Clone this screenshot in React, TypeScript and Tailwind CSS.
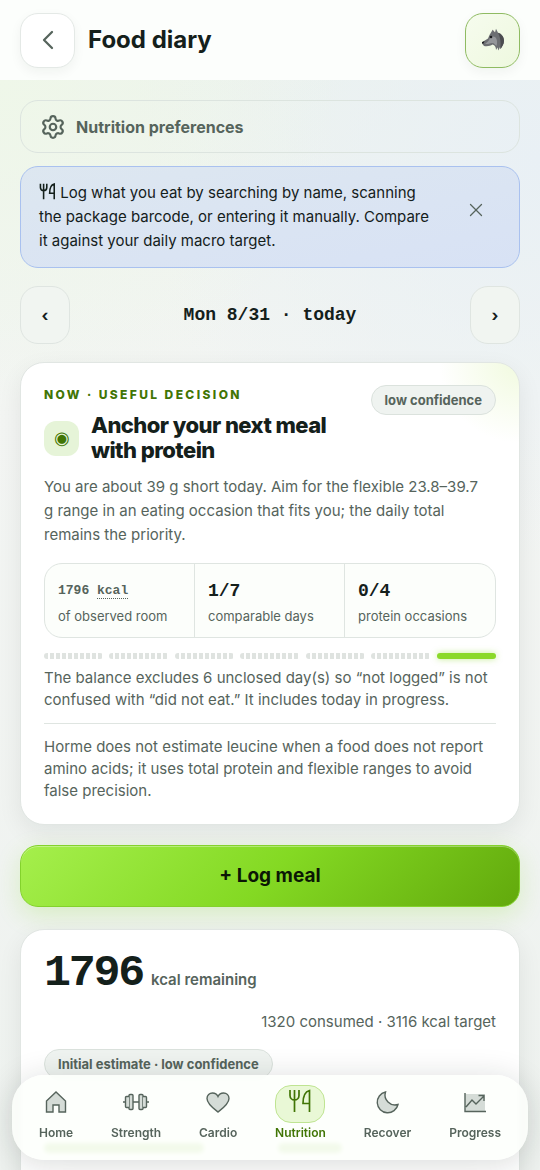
import { useState, type ReactNode } from "react";
import { Settings, ChevronLeft, X } from "lucide-react";

const MONO = "font-['Liberation_Mono',monospace]";

const STATS = [
  { value: "1/7", label: "comparable days" },
  { value: "0/4", label: "protein occasions" },
];

const DAYS = [
  { id: "tue", logged: false },
  { id: "wed", logged: false },
  { id: "thu", logged: false },
  { id: "fri", logged: false },
  { id: "sat", logged: false },
  { id: "sun", logged: false },
  { id: "mon", logged: true },
];

export default function App() {
  const [showTip, setShowTip] = useState(true);

  return (
    <div className="min-h-screen bg-[radial-gradient(circle_at_0%_80px,#eff7e9_0,transparent_340px),radial-gradient(circle_at_100%_160px,#e9f0f5_0,transparent_400px),linear-gradient(180deg,#ebf2ec_0,#f3f5f3_400px,#eef2ef_1170px)] font-[Inter,sans-serif] text-[#14201b]">
      <Header />

      <main className="flex flex-col px-5 pt-5 pb-32">
        <a
          href="#preferences"
          className="flex h-[53px] items-center gap-2.5 rounded-[18px] border border-[#dce4df] px-[19px] font-bold text-[#56645c]"
        >
          <Settings className="h-[26px] w-[26px]" strokeWidth={2} />
          <span className="text-base">Nutrition preferences</span>
        </a>

        {showTip && (
          <div className="mt-[13px] flex items-start gap-4 rounded-[18px] border border-[#a9c1ef] bg-linear-to-br from-[#dde7f0] to-[#d8e2f5] px-[18px] py-3.5">
            <p className="flex-1 text-[15px] leading-6">
              <CutleryIcon className="-mt-1 inline h-[17px] w-[17px]" strokeWidth={2.2} /> Log what you eat by searching
              by name, scanning the package barcode, or entering it manually. Compare it against your daily macro
              target.
            </p>
            <button
              aria-label="Dismiss"
              onClick={() => setShowTip(false)}
              className="flex h-[58px] w-[50px] items-center justify-center text-[#56645c]"
            >
              <X className="h-[22px] w-[22px]" strokeWidth={1.4} />
            </button>
          </div>
        )}

        {/* Date picker */}
        <div className="mt-[18px] flex items-center justify-between">
          <DayButton label="Previous day">‹</DayButton>
          <p className={`${MONO} text-lg font-bold`}>Mon 8/31 · today</p>
          <DayButton label="Next day">›</DayButton>
        </div>

        <DecisionCard />

        <button className="mt-5 h-[62px] rounded-[18px] border border-[#83d22c] bg-linear-[135deg,#a5ef4c,#84d923_50%,#62a90c] text-[19px] font-bold text-[#0b1705] shadow-[inset_0_1px_0_rgba(255,255,255,0.35),0_8px_24px_rgba(132,217,35,0.22)]">
          + Log meal
        </button>

        <BalanceCard />
      </main>

      <BottomNav />
    </div>
  );
}

function Header() {
  return (
    <header className="sticky top-0 z-10 flex h-20 items-center gap-[13px] bg-[#fcfefc] px-5">
      <button
        aria-label="Back"
        className="flex h-[55px] w-[55px] items-center justify-center rounded-[18px] border border-[#e4e9e6] bg-white text-[#56645c] shadow-[0_4px_12px_rgba(20,32,27,0.05)]"
      >
        <ChevronLeft className="h-8 w-8" strokeWidth={1.7} />
      </button>
      <h1 className="flex-1 text-2xl font-bold">Food diary</h1>
      <button
        aria-label="Profile"
        className="flex h-[55px] w-[55px] items-center justify-center rounded-[18px] border border-[#8fbb62] bg-linear-to-br from-[#f6fcee] to-[#eef8df] shadow-[0_4px_12px_rgba(20,32,27,0.05)]"
      >
        <WolfIcon />
      </button>
    </header>
  );
}

function DayButton({ label, children }: { label: string; children: ReactNode }) {
  return (
    <button
      aria-label={label}
      className="h-[58px] w-[50px] rounded-[18px] border border-[#dfe5e1] bg-[#f1f5f1] text-base font-bold"
    >
      {children}
    </button>
  );
}

function Pill({ children }: { children: ReactNode }) {
  return (
    <span className="shrink-0 rounded-full border border-[#dbe2dd] bg-[#eff3f0] px-[13px] py-1 text-[13px] leading-5 font-bold text-[#56645c]">
      {children}
    </span>
  );
}

function DecisionCard() {
  return (
    <section className="mt-[18px] rounded-3xl border border-[#e1e6e3] bg-white bg-[radial-gradient(circle_at_100%_0%,#f1fadf_0,transparent_80px)] px-[23px] py-[22px] shadow-[0_8px_24px_rgba(20,32,27,0.07)]">
      <div className="flex items-start justify-between">
        <div>
          <p className="text-xs leading-5 font-extrabold tracking-[0.2em] text-[#417505]">NOW · USEFUL DECISION</p>
          <div className="mt-2 flex items-center gap-3">
            <span className="flex h-[35px] w-[35px] shrink-0 items-center justify-center rounded-xl bg-[#e6f4d8] text-lg text-[#417505]">
              ◉
            </span>
            <h2 className="max-w-[250px] text-[22px] leading-[25px] font-extrabold tracking-tight">
              Anchor your next meal with protein
            </h2>
          </div>
        </div>
        <Pill>low confidence</Pill>
      </div>

      <p className="mt-3 pr-2 text-[15px] leading-6 text-[#56645c]">
        You are about 39 g short today. Aim for the flexible 23.8–39.7 g range in an eating occasion that fits you; the
        daily total remains the priority.
      </p>

      {/* Stats */}
      <div className="mt-4 grid grid-cols-3 divide-x divide-[#dfe5e1] rounded-[18px] border border-[#dfe5e1] bg-[#fcfefb]">
        <div className="px-[13px] pt-3 pb-[11px]">
          <p className={`${MONO} text-[13px] leading-[30px] font-bold text-[#56645c]`}>
            1796 <abbr className="border-b border-dotted border-[#56645c] no-underline">kcal</abbr>
          </p>
          <p className="text-[13px] leading-5 text-[#56645c]">of observed room</p>
        </div>
        {STATS.map((s) => (
          <div key={s.label} className="px-[13px] pt-3 pb-[11px]">
            <p className={`${MONO} text-lg leading-[30px] font-bold`}>{s.value}</p>
            <p className="text-[13px] leading-5 text-[#56645c]">{s.label}</p>
          </div>
        ))}
      </div>

      {/* Week strip */}
      <div className="mt-[15px] grid grid-cols-7 gap-1.5">
        {DAYS.map((d) => (
          <span
            key={d.id}
            className={`h-1.5 rounded-full ${
              d.logged
                ? "bg-[#8bd92a] shadow-[0_0_6px_rgba(139,217,42,0.5)]"
                : "bg-[repeating-linear-gradient(90deg,#dfe3e0_0,#dfe3e0_4px,transparent_4px,transparent_6px)]"
            }`}
          />
        ))}
      </div>

      <p className="mt-2 text-[15px] leading-[22px] text-[#56645c]">
        The balance excludes 6 unclosed day(s) so “not logged” is not confused with “did not eat.” It includes today in
        progress.
      </p>
      <p className="mt-3 border-t border-[#dfe5e1] pt-3 text-[15px] leading-[22px] text-[#56645c]">
        Horme does not estimate leucine when a food does not report amino acids; it uses total protein and flexible
        ranges to avoid false precision.
      </p>
    </section>
  );
}

function BalanceCard() {
  return (
    <section className="mt-[22px] rounded-3xl border border-[#e1e6e3] bg-white px-[23px] pt-5 pb-16 shadow-[0_8px_24px_rgba(20,32,27,0.07)]">
      <p className="flex items-baseline gap-2">
        <strong className={`${MONO} text-[45px] leading-[48px] tracking-tighter`}>1796</strong>
        <span className="text-[15px] font-semibold text-[#56645c]">kcal remaining</span>
      </p>
      <p className="mt-3 text-right text-[15px] leading-6 text-[#56645c]">1320 consumed · 3116 kcal target</p>
      <div className="mt-[15px] flex">
        <Pill>Initial estimate · low confidence</Pill>
      </div>
      <div className="mt-16 grid grid-cols-2 gap-4">
        <div className="h-2.5 w-40 rounded-full bg-[#b9dc8d]" />
        <div className="h-2.5 w-16 rounded-full bg-[#b9dc8d]" />
      </div>
    </section>
  );
}

const NAV_ITEMS = [
  { label: "Home", icon: <HomeIcon /> },
  { label: "Strength", icon: <DumbbellIcon /> },
  { label: "Cardio", icon: <HeartIcon /> },
  { label: "Nutrition", icon: <CutleryIcon className="mb-1.5 h-6 w-6" strokeWidth={1.7} />, active: true },
  { label: "Recover", icon: <MoonIcon /> },
  { label: "Progress", icon: <ChartIcon /> },
];

function BottomNav() {
  return (
    <nav className="fixed inset-x-3 bottom-2.5 z-10 flex rounded-[32px] bg-[#fdfffc]/85 px-2 pt-2.5 pb-[19px] shadow-[0_4px_32px_rgba(20,32,27,0.16)] backdrop-blur-[2px]">
      {NAV_ITEMS.map((item) => (
        <a
          key={item.label}
          href={`#${item.label.toLowerCase()}`}
          className={`flex flex-auto flex-col items-center text-xs font-semibold ${
            item.active ? "text-[#417505]" : "text-[#56645c]"
          }`}
        >
          <span
            className={`flex items-center justify-center rounded-2xl border ${
              item.active ? "h-[38px] w-[50px] border-[#bfe492] bg-[#e9f8d6]" : "h-[38px] w-8 border-transparent"
            }`}
          >
            {item.icon}
          </span>
          <span className="mt-0.5">{item.label}</span>
        </a>
      ))}
    </nav>
  );
}

function NavSvg({ children }: { children: ReactNode }) {
  return (
    <svg className="mb-1 h-6 w-6" viewBox="0 0 24 24" fill="#d5dcd7" stroke="currentColor" strokeWidth={1.4}>
      {children}
    </svg>
  );
}

function HomeIcon() {
  return (
    <NavSvg>
      <path d="M2.5 11 12 2l9.500 9v11H15v-7H9v7H2.500Z" />
    </NavSvg>
  );
}

function DumbbellIcon() {
  return (
    <svg className="mb-1 h-[26px] w-[26px]" viewBox="0 0 26 26" fill="#d5dcd7" stroke="currentColor" strokeWidth={1.4}>
      <path d="M10 13h6M0 13h2M24 13h2" />
      <rect x="6" y="5.500" width="4" height="15" rx="1" />
      <rect x="16" y="5.500" width="4" height="15" rx="1" />
      <path d="M6 7.500H3.500a1 1 0 0 0-1 1v9a1 1 0 0 0 1 1H6M20 7.500h2.500a1 1 0 0 1 1 1v9a1 1 0 0 1-1 1H20" />
    </svg>
  );
}

function HeartIcon() {
  return (
    <NavSvg>
      <path d="M12 22C8 19 1 14 1 8.500 1 5 3.500 3 6.500 3 9 3 11 4.300 12 6.500 13 4.300 15 3 17.500 3 20.500 3 23 5 23 8.500 23 14 16 19 12 22Z" />
    </NavSvg>
  );
}

function MoonIcon() {
  return (
    <NavSvg>
      <path d="M9.500 2A10.500 10.500 0 1 0 22 14.500 10 10 0 0 1 9.500 2Z" />
    </NavSvg>
  );
}

function ChartIcon() {
  return (
    <NavSvg>
      <path stroke="none" d="M2 4h20v17H2z" />
      <path fill="none" d="M2 3v18.500h21M3 17l6-7 4 4 8-8M15.500 5.500H21V11" />
    </NavSvg>
  );
}

function CutleryIcon({ className, strokeWidth }: { className: string; strokeWidth: number }) {
  return (
    <svg className={className} viewBox="0 0 24 24" fill="none" stroke="currentColor" strokeWidth={strokeWidth}>
      <path d="M2 1v5.500a4.500 4.500 0 0 0 9 0V1M6.500 1v22M21.500 23V1.500c-4 1-6.500 6-6.500 13h6.500" />
    </svg>
  );
}

function WolfIcon() {
  return (
    <svg className="h-6 w-6" viewBox="0 0 24 24">
      <path fill="#a08f8f" d="m11 6 .5-4.500L14.500 5Z" />
      <path
        fill="#6c6e72"
        d="m8.500 7 3-5 2.500 2.500L15 .8l2 4c3.500 1 6 4 6 8 0 3.500-2 6-3.500 8.200l-.5-2-1.500 3.500-1-3-1.500 2.500c0-3-1-4.500-3.500-5.500-2 1.500-5 2-8.500 1.500L1 15.500l2-2.500 4-2.500Z"
      />
      <path fill="#94969a" d="M9 10c2-2 5-2 6.500 1 1 3 .5 5 0 7-1.500-1-2-3-4.500-3-3 1-5 1-7 1 2-2 4-3 5-6Z" />
      <path fill="#4b4c50" d="M17 4.800c3.500 1 6 4 6 8 0 3.500-2 6-3.500 8.200 0-4 1-9-2.500-16.200Z" />
      <circle cx="10" cy="9" r="1.300" fill="#1b1c1f" />
      <path fill="#1b1c1f" d="m1 14 2.500-1-1 2.500H1Z" />
    </svg>
  );
}
